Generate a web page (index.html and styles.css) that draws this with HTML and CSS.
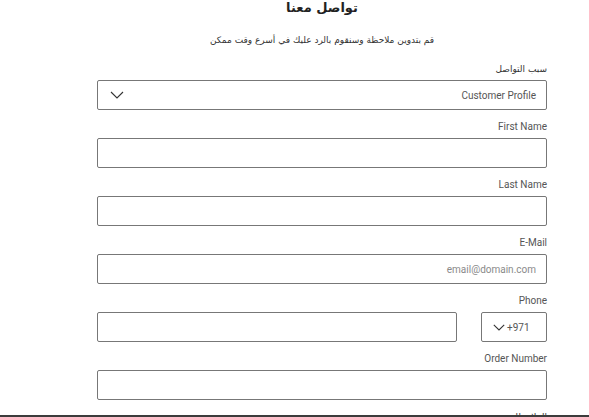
FILE: index.html
```html
<!DOCTYPE html>
<html lang="ar" dir="rtl">
<head>
<meta charset="utf-8">
<title>تواصل معنا</title>
<link rel="stylesheet" href="styles.css">
</head>
<body>
<main class="contact">
  <h1 class="title">تواصل معنا</h1>
  <p class="subtitle">قم بتدوين ملاحظة وسنقوم بالرد عليك في أسرع وقت ممكن</p>
  <form class="form">
    <div class="field">
      <label class="label label-ar">سبب التواصل</label>
      <div class="box select">
        <span class="value">Customer Profile</span>
        <svg class="chev" width="14" height="8" viewBox="0 0 14 8"><path d="M1 1 L7 7 L13 1" fill="none" stroke="#333" stroke-width="1.1"/></svg>
      </div>
    </div>
    <div class="field">
      <label class="label">First Name</label>
      <input class="box input" type="text">
    </div>
    <div class="field">
      <label class="label">Last Name</label>
      <input class="box input" type="text">
    </div>
    <div class="field">
      <label class="label">E-Mail</label>
      <input class="box input" type="text" placeholder="email@domain.com">
    </div>
    <div class="field">
      <label class="label">Phone</label>
      <div class="phone-row">
        <div class="box code">
          <svg class="chev-sm" width="12" height="7" viewBox="0 0 12 7"><path d="M0.8 0.8 L6 6 L11.2 0.8" fill="none" stroke="#333" stroke-width="1.1"/></svg>
          <span class="code-text">+971</span>
        </div>
        <input class="box input phone" type="text">
      </div>
    </div>
    <div class="field">
      <label class="label">Order Number</label>
      <input class="box input" type="text">
    </div>
    <div class="field">
      <label class="label label-ar">الملاحظات</label>
    </div>
  </form>
</main>
<div class="bottom-bar"></div>
</body>
</html>
```
FILE: styles.css
```css
html, body {
  margin: 0;
  padding: 0;
  background: #fff;
}
body {
  font-family: Roboto, "DejaVu Sans", sans-serif;
  color: #333;
  overflow: hidden;
}
.contact {
  width: 450px;
  margin-right: 42px;
}
.title {
  margin: 0;
  font-family: "DejaVu Sans", sans-serif;
  font-size: 13px;
  line-height: 16px;
  font-weight: bold;
  text-align: center;
  color: #222;
}
.subtitle {
  margin: 17px 0 15px;
  font-family: "DejaVu Sans", sans-serif;
  font-size: 9px;
  line-height: 14px;
  text-align: center;
  color: #333;
}
.form {
  display: flex;
  flex-direction: column;
  gap: 10px;
}
.field {
  display: flex;
  flex-direction: column;
}
.label {
  display: block;
  font-size: 10px;
  line-height: 14px;
  margin-bottom: 4px;
  color: #555;
  font-family: Roboto, "DejaVu Sans", sans-serif;
}
.label-ar {
  font-family: "DejaVu Sans", sans-serif;
  font-size: 9px;
  color: #333;
}
.box {
  box-sizing: border-box;
  height: 30px;
  border: 1px solid #777;
  border-radius: 2px;
  background: #fff;
}
.input {
  width: 100%;
  padding: 0 10px;
  font-family: Roboto, sans-serif;
  font-size: 10px;
  outline: none;
  margin: 0;
}
.input::placeholder {
  color: #8a8a8a;
}
.select {
  display: flex;
  align-items: center;
  justify-content: space-between;
  padding: 0 10px 0 12px;
}
.value {
  font-size: 10px;
  color: #555;
}
.chev {
  display: block;
}
.phone-row {
  display: flex;
  gap: 24px;
}
.code {
  width: 66px;
  flex: none;
  display: flex;
  direction: ltr;
  align-items: center;
  justify-content: flex-start;
  padding-left: 11px;
  gap: 2px;
}
.code-text {
  font-size: 10px;
  color: #555;
}
.phone {
  flex: 1;
  width: auto;
}
.bottom-bar {
  position: fixed;
  left: 0;
  right: 0;
  bottom: 0;
  height: 2px;
  background: #3c3c3c;
}
```
